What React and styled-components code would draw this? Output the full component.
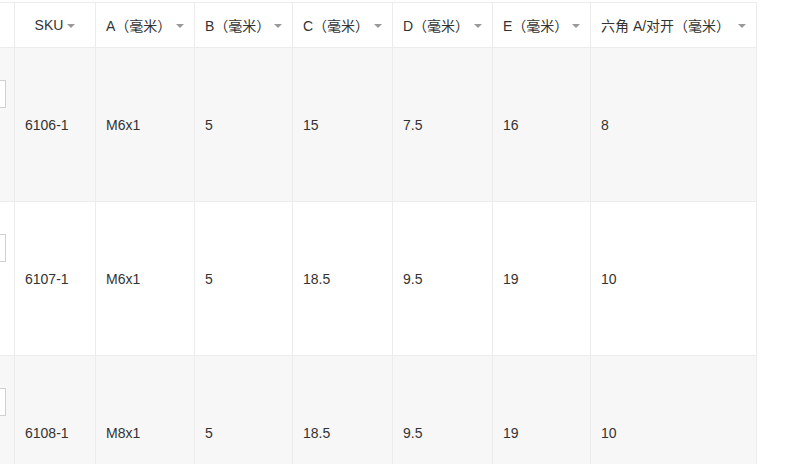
import React from "react";
import styled, { createGlobalStyle } from "styled-components";

const GlobalStyle = createGlobalStyle`
  html, body {
    margin: 0;
    padding: 0;
    background: #fff;
  }
  body {
    font-family: "Liberation Sans", Arial, "Noto Sans CJK SC", sans-serif;
    color: #333;
  }
`;

const Viewport = styled.div`
  width: 800px;
  height: 464px;
  overflow: hidden;
  padding-top: 2px;
  box-sizing: border-box;
`;

const Table = styled.table`
  border-collapse: collapse;
  table-layout: fixed;
  width: ${(p) => p.$width}px;
  margin-left: -46px;
  font-size: 14px;
`;

const HeadCell = styled.th`
  height: 45px;
  padding: 0 10px;
  border: 1px solid #ececec;
  font-weight: normal;
  color: #333;
  text-align: ${(p) => (p.$center ? "center" : "left")};
  white-space: nowrap;
  overflow: hidden;
  box-sizing: border-box;
`;

const HeadInner = styled.div`
  display: flex;
  align-items: center;
  justify-content: ${(p) => (p.$center ? "center" : "space-between")};
  gap: 4px;
`;

const Caret = styled.span`
  display: inline-block;
  flex: none;
  width: 0;
  height: 0;
  border-left: 4px solid transparent;
  border-right: 4px solid transparent;
  border-top: 4px solid #999;
  margin-top: 1px;
`;

const Row = styled.tr`
  background: ${(p) => (p.$striped ? "#f7f7f7" : "#fff")};
`;

const Cell = styled.td`
  height: 153px;
  padding: 0 10px;
  border: 1px solid #ececec;
  vertical-align: middle;
  white-space: nowrap;
  box-sizing: border-box;
`;

const QtyCell = styled.td`
  height: 153px;
  padding: 0;
  border: 1px solid #ececec;
  vertical-align: top;
`;

const QtyBox = styled.div`
  margin: 32px 0 0 11px;
  width: 40px;
  height: 28px;
  border: 1px solid #d0d0d0;
  background: #fff;
  box-sizing: border-box;
`;

const columns = [
  { key: "qty", label: "", width: 60 },
  { key: "sku", label: "SKU", width: 81, center: true },
  { key: "a", label: "A（毫米）", width: 99 },
  { key: "b", label: "B（毫米）", width: 98 },
  { key: "c", label: "C（毫米）", width: 100 },
  { key: "d", label: "D（毫米）", width: 100 },
  { key: "e", label: "E（毫米）", width: 98 },
  { key: "hex", label: "六角 A/对开（毫米）", width: 166 },
];

const rows = [
  { sku: "6106-1", a: "M6x1", b: "5", c: "15", d: "7.5", e: "16", hex: "8" },
  { sku: "6107-1", a: "M6x1", b: "5", c: "18.5", d: "9.5", e: "19", hex: "10" },
  { sku: "6108-1", a: "M8x1", b: "5", c: "18.5", d: "9.5", e: "19", hex: "10" },
];

const tableWidth = columns.reduce((sum, c) => sum + c.width, 0);

export default function App() {
  return (
    <>
      <GlobalStyle />
      <Viewport>
        <Table $width={tableWidth}>
          <colgroup>
            {columns.map((c) => (
              <col key={c.key} style={{ width: c.width }} />
            ))}
          </colgroup>
          <thead>
            <tr>
              {columns.map((c) => (
                <HeadCell key={c.key} $center={c.center}>
                  {c.label && (
                    <HeadInner $center={c.center}>
                      <span>{c.label}</span>
                      <Caret />
                    </HeadInner>
                  )}
                </HeadCell>
              ))}
            </tr>
          </thead>
          <tbody>
            {rows.map((r, i) => (
              <Row key={r.sku} $striped={i % 2 === 0}>
                <QtyCell>
                  <QtyBox />
                </QtyCell>
                <Cell>{r.sku}</Cell>
                <Cell>{r.a}</Cell>
                <Cell>{r.b}</Cell>
                <Cell>{r.c}</Cell>
                <Cell>{r.d}</Cell>
                <Cell>{r.e}</Cell>
                <Cell>{r.hex}</Cell>
              </Row>
            ))}
          </tbody>
        </Table>
      </Viewport>
    </>
  );
}
